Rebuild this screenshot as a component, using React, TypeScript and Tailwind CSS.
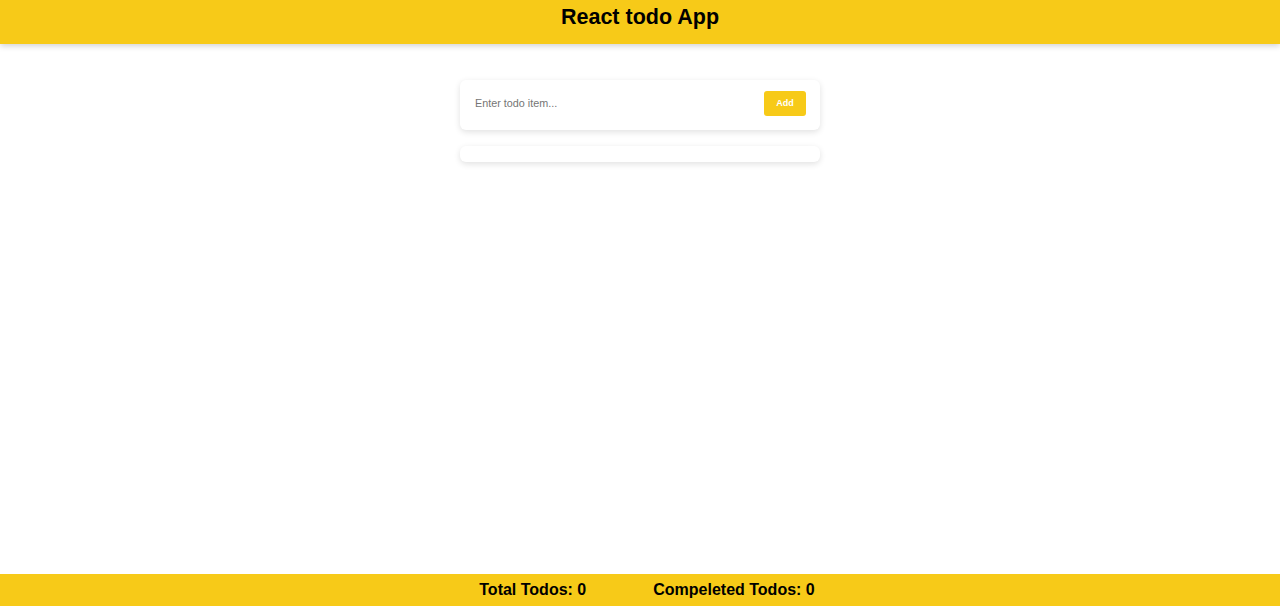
import { useState } from "react";

export default function App() {
  const [text, setText] = useState("");
  const [todos, setTodos] = useState<{ id: number; title: string; done: boolean }[]>([]);

  const addTodo = () => {
    if (!text.trim()) return;
    setTodos((current) => [...current, { id: Date.now(), title: text.trim(), done: false }]);
    setText("");
  };

  const completed = todos.filter((todo) => todo.done).length;

  return (
    <div className="flex min-h-[606px] flex-col bg-white font-['Liberation_Sans',Arial,sans-serif] text-black">
      <header className="h-[44px] bg-[#f7ca18] pt-[3px] text-center shadow-[0_2px_6px_rgba(0,0,0,0.18)]">
        <h1 className="text-[21.5px] font-bold leading-[28px]">React todo App</h1>
      </header>

      <main className="flex flex-1 flex-col items-center pt-[36px]">
        <div className="flex h-[50px] w-[360px] items-center justify-between rounded-[6px] bg-white pb-[3px] pl-[15px] pr-[14px] shadow-[0_2px_6px_rgba(0,0,0,0.12)]">
          <input
            value={text}
            onChange={(e) => setText(e.target.value)}
            onKeyDown={(e) => e.key === "Enter" && addTodo()}
            placeholder="Enter todo item..."
            className="w-[260px] bg-transparent text-[10.8px] text-gray-700 outline-none placeholder:text-[#757575]"
          />
          <button
            onClick={addTodo}
            className="h-[25px] w-[42px] rounded-[3px] bg-[#f7ca18] text-[9px] font-bold text-white"
          >
            Add
          </button>
        </div>

        <ul className="mt-[16px] min-h-[16px] w-[360px] rounded-[6px] bg-white shadow-[0_2px_6px_rgba(0,0,0,0.12)]">
          {todos.map((todo) => (
            <li key={todo.id} className="flex items-center gap-2 px-[15px] py-2 text-[12px]">
              <input
                type="checkbox"
                checked={todo.done}
                onChange={() =>
                  setTodos((current) =>
                    current.map((t) => (t.id === todo.id ? { ...t, done: !t.done } : t)),
                  )
                }
              />
              <span className={todo.done ? "line-through text-gray-400" : ""}>{todo.title}</span>
            </li>
          ))}
        </ul>
      </main>

      <footer className="flex h-[32px] items-center justify-center gap-[67px] bg-[#f7ca18] pl-[14px] text-[16px] font-bold">
        <span>Total Todos: {todos.length}</span>
        <span>Compeleted Todos: {completed}</span>
      </footer>
    </div>
  );
}
